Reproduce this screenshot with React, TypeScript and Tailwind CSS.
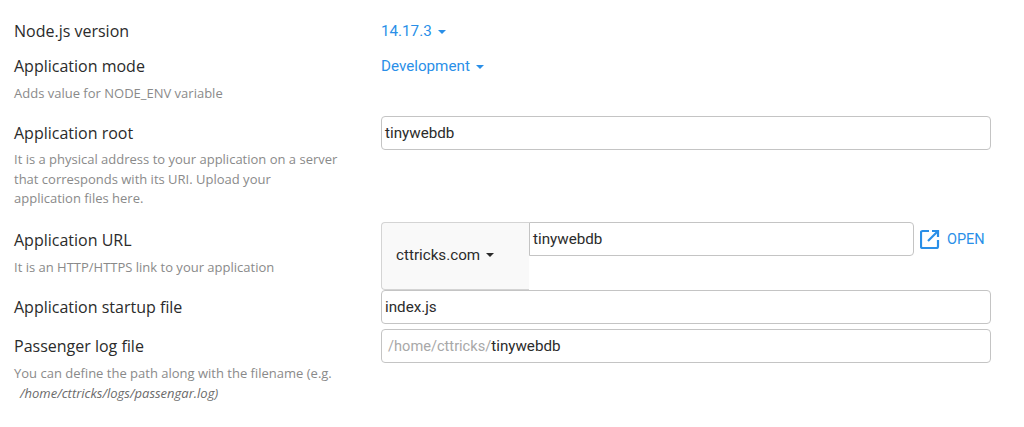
const labelFont = "font-['Open_Sans',sans-serif] text-[16px] leading-[22px] text-[#2b2b2b]";
const helpFont = "font-['Open_Sans',sans-serif] text-[13px] leading-[19px] text-[#8a8a8a]";
const valueFont = "font-['Roboto',sans-serif] text-[15.2px] leading-[22px]";

function Caret({ className }: { className: string }) {
  return <span className={`ml-[6px] inline-block h-0 w-0 border-x-[4.5px] border-t-[4.5px] border-x-transparent align-middle ${className}`} />;
}

function Field({ children }: { children: React.ReactNode }) {
  return (
    <div className={`flex h-[34px] items-center rounded-[4px] border border-[#c4c4c4] bg-white px-[3px] text-[#2b2b2b] ${valueFont}`}>
      {children}
    </div>
  );
}

export default function App() {
  return (
    <div className="h-[427px] w-[1024px] overflow-hidden bg-white pl-[14px] pt-[20px]">
      <div className="grid h-[22px] grid-cols-[367px_610px]">
        <div className={labelFont}>Node.js version</div>
        <div className={`${valueFont} text-[#2a8fe8]`}>
          14.17.3
          <Caret className="border-t-[#2a8fe8]" />
        </div>
      </div>

      <div className="mt-[13px] grid h-[50px] grid-cols-[367px_610px]">
        <div>
          <div className={labelFont}>Application mode</div>
          <div className={`mt-[7px] ${helpFont}`}>Adds value for NODE_ENV variable</div>
        </div>
        <div className={`${valueFont} text-[#2a8fe8]`}>
          Development
          <Caret className="border-t-[#2a8fe8]" />
        </div>
      </div>

      <div className="mt-[11px] grid h-[106px] grid-cols-[367px_610px]">
        <div>
          <div className={`pt-[6px] ${labelFont}`}>Application root</div>
          <div className="mt-[6px] w-[325px] font-['Open_Sans',sans-serif] text-[13px] leading-[19.5px] text-[#8a8a8a]">
            It is a physical address to your application on a server that corresponds with its URI. Upload your application files here.
          </div>
        </div>
        <Field>tinywebdb</Field>
      </div>

      <div className="grid h-[68px] grid-cols-[367px_610px]">
        <div>
          <div className={`pt-[7px] ${labelFont}`}>Application URL</div>
          <div className={`mt-[7px] ${helpFont}`}>It is an HTTP/HTTPS link to your application</div>
        </div>
        <div className="flex items-start">
          <div className={`flex h-[68px] w-[148px] items-center rounded-l-[4px] border-b border-l border-t border-[#d4d4d4] bg-[#f9f9f9] pb-[2px] pl-[14px] text-[#2b2b2b] ${valueFont}`}>
            cttricks.com
            <Caret className="border-t-[#2b2b2b]" />
          </div>
          <div className={`flex h-[34px] w-[385px] items-center rounded-r-[4px] border border-[#c4c4c4] bg-white px-[3px] text-[#2b2b2b] ${valueFont}`}>
            tinywebdb
          </div>
          <div className="ml-[6px] flex h-[34px] items-center text-[#2a8fe8]">
            <svg width="20" height="20" viewBox="0 0 20 20" fill="none" stroke="#2a8fe8" strokeWidth="2.200">
              <path d="M9 2H2.500C1.700 2 1 2.700 1 3.500V17.500C1 18.300 1.700 19 2.500 19H16.500C17.300 19 18 18.300 18 17.500V11" />
              <path d="M12 2H18V8" />
              <path d="M18 2L8 12" />
            </svg>
            <span className="ml-[7px] pt-[2px] font-['Roboto',sans-serif] text-[14.5px] leading-[22px]">OPEN</span>
          </div>
        </div>
      </div>

      <div className="grid h-[39px] grid-cols-[367px_610px]">
        <div className={`pt-[6px] ${labelFont}`}>Application startup file</div>
        <Field>index.js</Field>
      </div>

      <div className="grid grid-cols-[367px_610px]">
        <div>
          <div className={`pt-[6px] ${labelFont}`}>Passenger log file</div>
          <div className="mt-[6px] w-[340px] font-['Open_Sans',sans-serif] text-[13px] leading-[20px] text-[#8a8a8a]">
            You can define the path along with the filename (e.g.
            <br />
            <span className="ml-[6px] italic text-[#6b6b6b]">/home/cttricks/logs/passengar.log)</span>
          </div>
        </div>
        <Field>
          <span className="pl-[3px] text-[14.6px] text-[#a8a8a8]">/home/cttricks/</span>
          tinywebdb
        </Field>
      </div>
    </div>
  );
}
